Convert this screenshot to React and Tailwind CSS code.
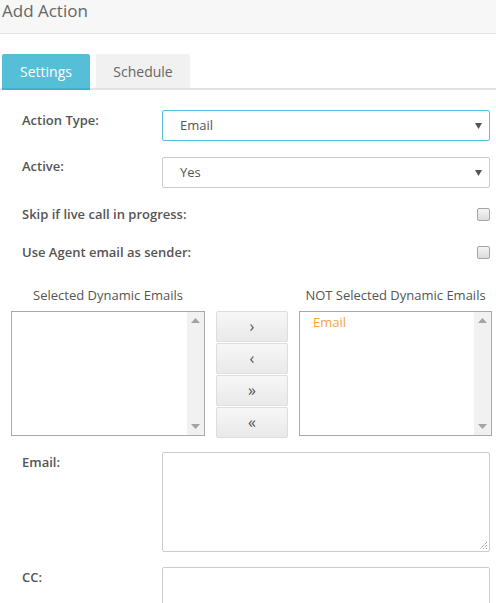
import React from "react";

function Scrollbar() {
  return (
    <div className="flex w-[17px] flex-col items-center justify-between bg-[#f1f1f1] py-[6px]">
      <svg width="9" height="5" viewBox="0 0 9 5"><path d="M0 5 L4.5 0 L9 5 Z" fill="#a3a3a3" /></svg>
      <svg width="9" height="5" viewBox="0 0 9 5"><path d="M0 0 L4.5 5 L9 0 Z" fill="#a3a3a3" /></svg>
    </div>
  );
}

function FakeSelect({ value, focused }) {
  return (
    <div
      className={
        "flex h-[31px] flex-1 items-center justify-between rounded-[2px] border bg-white pl-[17px] pr-[7px] text-[13px] font-normal text-[#555] " +
        (focused ? "border-[#5bc0de]" : "border-[#cccccc]")
      }
    >
      <span>{value}</span>
      <svg width="7" height="7" viewBox="0 0 7 7"><path d="M0 1 L7 1 L3.5 7 Z" fill="#555" /></svg>
    </div>
  );
}

function Checkbox() {
  return (
    <div className="h-[13px] w-[13px] rounded-[2px] border border-[#a6a6a6] bg-gradient-to-b from-[#f4f4f4] to-[#dcdcdc]" />
  );
}

function MoveButton({ children }) {
  return (
    <div className="flex h-[31px] items-center justify-center rounded-[2px] border border-[#dddddd] bg-gradient-to-b from-[#f7f7f7] to-[#e9e9e9] pb-[2px] text-[16px] leading-none text-[#555]">
      {children}
    </div>
  );
}

export default function App() {
  return (
    <div className="min-h-[603px] w-[496px] overflow-hidden bg-white font-['Open_Sans',sans-serif] text-[#333]">
      {/* header */}
      <div className="h-[34px] border-b border-[#e3e3e3] bg-[#f7f7f7] pl-[2px]">
        <div className="text-[17px] leading-[21px] text-[#666]">Add Action</div>
      </div>

      {/* tabs */}
      <div className="mt-[20px] flex items-end gap-[6px] border-b-[2px] border-[#e2e2e2] pl-[2px]">
        <div className="-mb-[2px] flex h-[36px] w-[88px] items-center justify-center rounded-t-[2px] border-b-[2px] border-[#3db0cc] bg-[#55bfd7] text-[14px] text-white">
          Settings
        </div>
        <div className="flex h-[34px] w-[94px] items-center justify-center rounded-t-[2px] bg-[#f1f1f1] text-[14px] text-[#666]">
          Schedule
        </div>
      </div>

      {/* form */}
      <div className="mt-[20px] flex flex-col pl-[22px] pr-[6px] text-[13px] font-semibold text-[#555]">
        <div className="flex items-start">
          <div className="w-[140px] pt-[1px] leading-[18px]">Action Type:</div>
          <FakeSelect value="Email" focused />
        </div>
        <div className="mt-[16px] flex items-start">
          <div className="w-[140px] pt-[0px] leading-[18px]">Active:</div>
          <FakeSelect value="Yes" />
        </div>
        <div className="mt-[17px] flex h-[18px] items-center justify-between">
          <div className="leading-[18px]">Skip if live call in progress:</div>
          <Checkbox />
        </div>
        <div className="mt-[20px] flex h-[18px] items-center justify-between">
          <div className="leading-[18px]">Use Agent email as sender:</div>
          <Checkbox />
        </div>
      </div>

      {/* dual list */}
      <div className="mt-[25px] flex pl-[11px] pr-[4px] text-[13px] text-[#555]">
        <div className="flex w-[194px] flex-col">
          <div className="text-center leading-[18px]">Selected Dynamic Emails</div>
          <div className="mt-[7px] flex h-[125px] border border-[#a9a9a9] bg-white">
            <div className="flex-1" />
            <Scrollbar />
          </div>
        </div>
        <div className="ml-[11px] mt-[25px] flex w-[72px] flex-col gap-[1px]">
          <MoveButton>›</MoveButton>
          <MoveButton>‹</MoveButton>
          <MoveButton>»</MoveButton>
          <MoveButton>«</MoveButton>
        </div>
        <div className="ml-[11px] flex w-[193px] flex-col">
          <div className="text-center leading-[18px]">NOT Selected Dynamic Emails</div>
          <div className="mt-[7px] flex h-[125px] border border-[#a9a9a9] bg-white">
            <div className="flex-1 pl-[13px] pt-[1px] leading-[18px] text-[#f5a142]">Email</div>
            <Scrollbar />
          </div>
        </div>
      </div>

      {/* textareas */}
      <div className="mt-[14px] flex flex-col pl-[22px] pr-[6px] text-[13px] font-semibold text-[#555]">
        <div className="flex items-start">
          <div className="w-[140px] pt-[1px] leading-[18px]">Email:</div>
          <div className="relative h-[100px] flex-1 rounded-[2px] border border-[#cccccc] bg-white">
            <svg className="absolute bottom-[1px] right-[1px]" width="10" height="10" viewBox="0 0 10 10">
              <path d="M9 2 L2 9 M9 5 L5 9 M9 8 L8 9" stroke="#777" strokeWidth="1" strokeDasharray="1 1" />
            </svg>
          </div>
        </div>
        <div className="mt-[15px] flex items-start">
          <div className="w-[140px] pt-[1px] leading-[18px]">CC:</div>
          <div className="h-[60px] flex-1 rounded-[2px] border border-[#cccccc] bg-white" />
        </div>
      </div>
    </div>
  );
}
